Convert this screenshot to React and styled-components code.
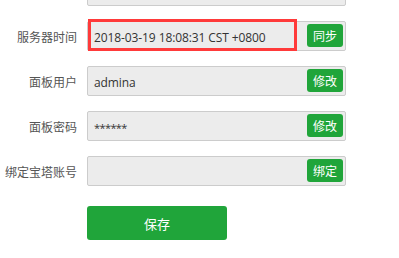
import React from "react";
import styled, { createGlobalStyle } from "styled-components";

const Global = createGlobalStyle`
  html, body { margin: 0; padding: 0; background: #fff; }
  body { font-family: "Open Sans", "Noto Sans CJK SC", sans-serif; }
`;

const Form = styled.div`
  display: flex;
  flex-direction: column;
  gap: 15px;
  margin-top: -24px;
  width: 399px;
`;

const Row = styled.div`
  display: flex;
  align-items: center;
  height: 30px;
`;

const Label = styled.div`
  width: 77px;
  margin-right: 10px;
  text-align: right;
  font-family: "Noto Sans CJK SC", sans-serif;
  font-size: 12px;
  color: #555;
  white-space: nowrap;
`;

const Field = styled.div`
  position: relative;
  box-sizing: border-box;
  width: 259px;
  height: 30px;
  display: flex;
  align-items: center;
  background: #ececec;
  border: 1px solid #ccc;
  border-radius: 2px;
  padding: 0 2px 0 6px;
`;

const Value = styled.span`
  flex: 1;
  font-family: "Open Sans", "Noto Sans CJK SC", sans-serif;
  font-size: ${(p) => (p.$stars ? "11px" : "12px")};
  color: #333;
  letter-spacing: ${(p) => (p.$stars ? "-0.6px" : "-0.1px")};
  white-space: nowrap;
  padding-top: 2px;
`;

const SmallBtn = styled.button`
  width: 36px;
  height: 23px;
  border: none;
  border-radius: 3px;
  background: #20a53a;
  color: #fff;
  font-family: "Noto Sans CJK SC", sans-serif;
  font-size: 12px;
  padding: 0;
  line-height: 23px;
  margin-top: -1px;
`;

const Highlight = styled.div`
  position: absolute;
  left: 0px;
  top: -3px;
  width: 209px;
  height: 32px;
  box-sizing: border-box;
  border: 3px solid #ff3a3a;
  pointer-events: none;
`;

const SaveRow = styled.div`
  display: flex;
  padding-left: 87px;
  margin-top: 5px;
`;

const SaveBtn = styled.button`
  width: 140px;
  height: 34px;
  border: none;
  border-radius: 3px;
  background: #20a53a;
  color: #fff;
  font-family: "Noto Sans CJK SC", sans-serif;
  font-size: 13px;
  padding: 0;
`;

export default function App() {
  return (
    <>
      <Global />
      <Form>
        <Row>
          <Label />
          <Field />
        </Row>
        <Row>
          <Label>服务器时间</Label>
          <Field>
            <Value>2018-03-19 18:08:31 CST +0800</Value>
            <SmallBtn>同步</SmallBtn>
            <Highlight />
          </Field>
        </Row>
        <Row>
          <Label>面板用户</Label>
          <Field>
            <Value>admina</Value>
            <SmallBtn>修改</SmallBtn>
          </Field>
        </Row>
        <Row>
          <Label>面板密码</Label>
          <Field>
            <Value $stars>******</Value>
            <SmallBtn>修改</SmallBtn>
          </Field>
        </Row>
        <Row>
          <Label>绑定宝塔账号</Label>
          <Field>
            <Value></Value>
            <SmallBtn>绑定</SmallBtn>
          </Field>
        </Row>
        <SaveRow>
          <SaveBtn>保存</SaveBtn>
        </SaveRow>
      </Form>
    </>
  );
}
